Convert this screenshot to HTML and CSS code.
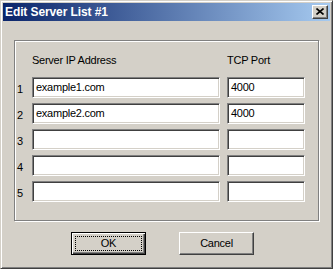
FILE: index.html
```html
<!DOCTYPE html>
<html lang="en">
<head>
    <meta charset="UTF-8">
    <title>Edit Server List #1</title>
    <link rel="stylesheet" href="styles.css">
</head>
<body>
    <div class="window">
        <div class="titlebar">
            <span class="title">Edit Server List #1</span>
            <div class="close">
                <svg width="8" height="7" viewBox="0 0 8 7">
                    <path d="M0.5 0.5 L7.5 6.5 M7.5 0.5 L0.5 6.5" stroke="#000" stroke-width="1.6" fill="none"/>
                </svg>
            </div>
        </div>

        <div class="content">
            <!-- Server list -->
            <div class="group">
                <div class="head">
                    <span class="h-ip">Server IP Address</span>
                    <span class="h-port">TCP Port</span>
                </div>
                <div class="row">
                    <span class="num">1</span>
                    <div class="field ip">example1.com</div>
                    <div class="field port">4000</div>
                </div>
                <div class="row">
                    <span class="num">2</span>
                    <div class="field ip">example2.com</div>
                    <div class="field port">4000</div>
                </div>
                <div class="row">
                    <span class="num">3</span>
                    <div class="field ip"></div>
                    <div class="field port"></div>
                </div>
                <div class="row">
                    <span class="num">4</span>
                    <div class="field ip"></div>
                    <div class="field port"></div>
                </div>
                <div class="row">
                    <span class="num">5</span>
                    <div class="field ip"></div>
                    <div class="field port"></div>
                </div>
            </div>

            <!-- Buttons -->
            <div class="buttons">
                <div class="btn default"><span class="focus">OK</span></div>
                <div class="btn">Cancel</div>
            </div>
        </div>
    </div>
</body>
</html>
```

FILE: styles.css
```css
* {
    margin: 0;
    padding: 0;
    box-sizing: border-box;
    font-family: 'Liberation Sans', Arial, sans-serif;
}

body {
    background: #d4d0c8;
    width: 333px;
    height: 269px;
    overflow: hidden;
}

/* Window frame */
.window {
    width: 333px;
    height: 269px;
    background: #d4d0c8;
    border: 1px solid;
    border-color: #d4d0c8 #404040 #404040 #d4d0c8;
    box-shadow: inset 1px 1px 0 #fff, inset -1px -1px 0 #808080;
    padding: 2px;
}

/* Title bar */
.titlebar {
    height: 18px;
    background: linear-gradient(to right, #0a246a, #a6caf0);
    display: flex;
    align-items: center;
    justify-content: space-between;
    padding: 0 2px 0 2px;
}

.title {
    color: white;
    font-size: 12px;
    font-weight: bold;
    line-height: 18px;
    letter-spacing: -0.1px;
}

.close {
    width: 16px;
    height: 14px;
    background: #d4d0c8;
    border: 1px solid;
    border-color: #fff #404040 #404040 #fff;
    box-shadow: inset -1px -1px 0 #808080;
    display: flex;
    align-items: center;
    justify-content: center;
    padding-bottom: 1px;
}

.close svg {
    display: block;
}

/* Dialog body */
.content {
    padding-top: 19px;
    font-size: 11px;
    letter-spacing: -0.25px;
    color: #000;
}

.group {
    width: 305px;
    height: 181px;
    margin-left: 11px;
    border: 1px solid #808080;
    box-shadow: inset 1px 1px 0 #fff, 1px 1px 0 #fff;
    padding-top: 13px;
}

.head {
    display: flex;
    line-height: 13px;
    height: 13px;
    margin-bottom: 10px;
}

.h-ip {
    padding-left: 17px;
    width: 212px;
}

.row {
    display: flex;
    align-items: center;
    height: 21px;
    margin-bottom: 5px;
}

.num {
    width: 17px;
    padding-left: 2px;
    padding-top: 3px;
    line-height: 13px;
}

.field {
    height: 21px;
    background: #fff;
    border: 1px solid;
    border-color: #808080 #fff #fff #808080;
    box-shadow: inset 1px 1px 0 #404040, inset -1px -1px 0 #d4d0c8;
    padding: 3px 3px 0 3px;
    line-height: 13px;
    font-size: 11px;
}

.ip {
    width: 188px;
}

.port {
    width: 78px;
    margin-left: 7px;
}

/* Buttons */
.buttons {
    display: flex;
    margin-top: 11px;
    padding-left: 68px;
    gap: 33px;
}

.btn {
    width: 75px;
    height: 23px;
    background: #d4d0c8;
    border: 1px solid;
    border-color: #fff #404040 #404040 #fff;
    box-shadow: inset -1px -1px 0 #808080;
    display: flex;
    align-items: center;
    justify-content: center;
    font-size: 11px;
    line-height: 13px;
}

.btn.default {
    border: 1px solid #000;
    box-shadow: inset 1px 1px 0 #fff, inset -1px -1px 0 #404040, inset -2px -2px 0 #808080;
    padding: 3px;
}

.focus {
    display: flex;
    align-items: center;
    justify-content: center;
    width: 100%;
    height: 100%;
    border: 1px dotted #000;
}
```
